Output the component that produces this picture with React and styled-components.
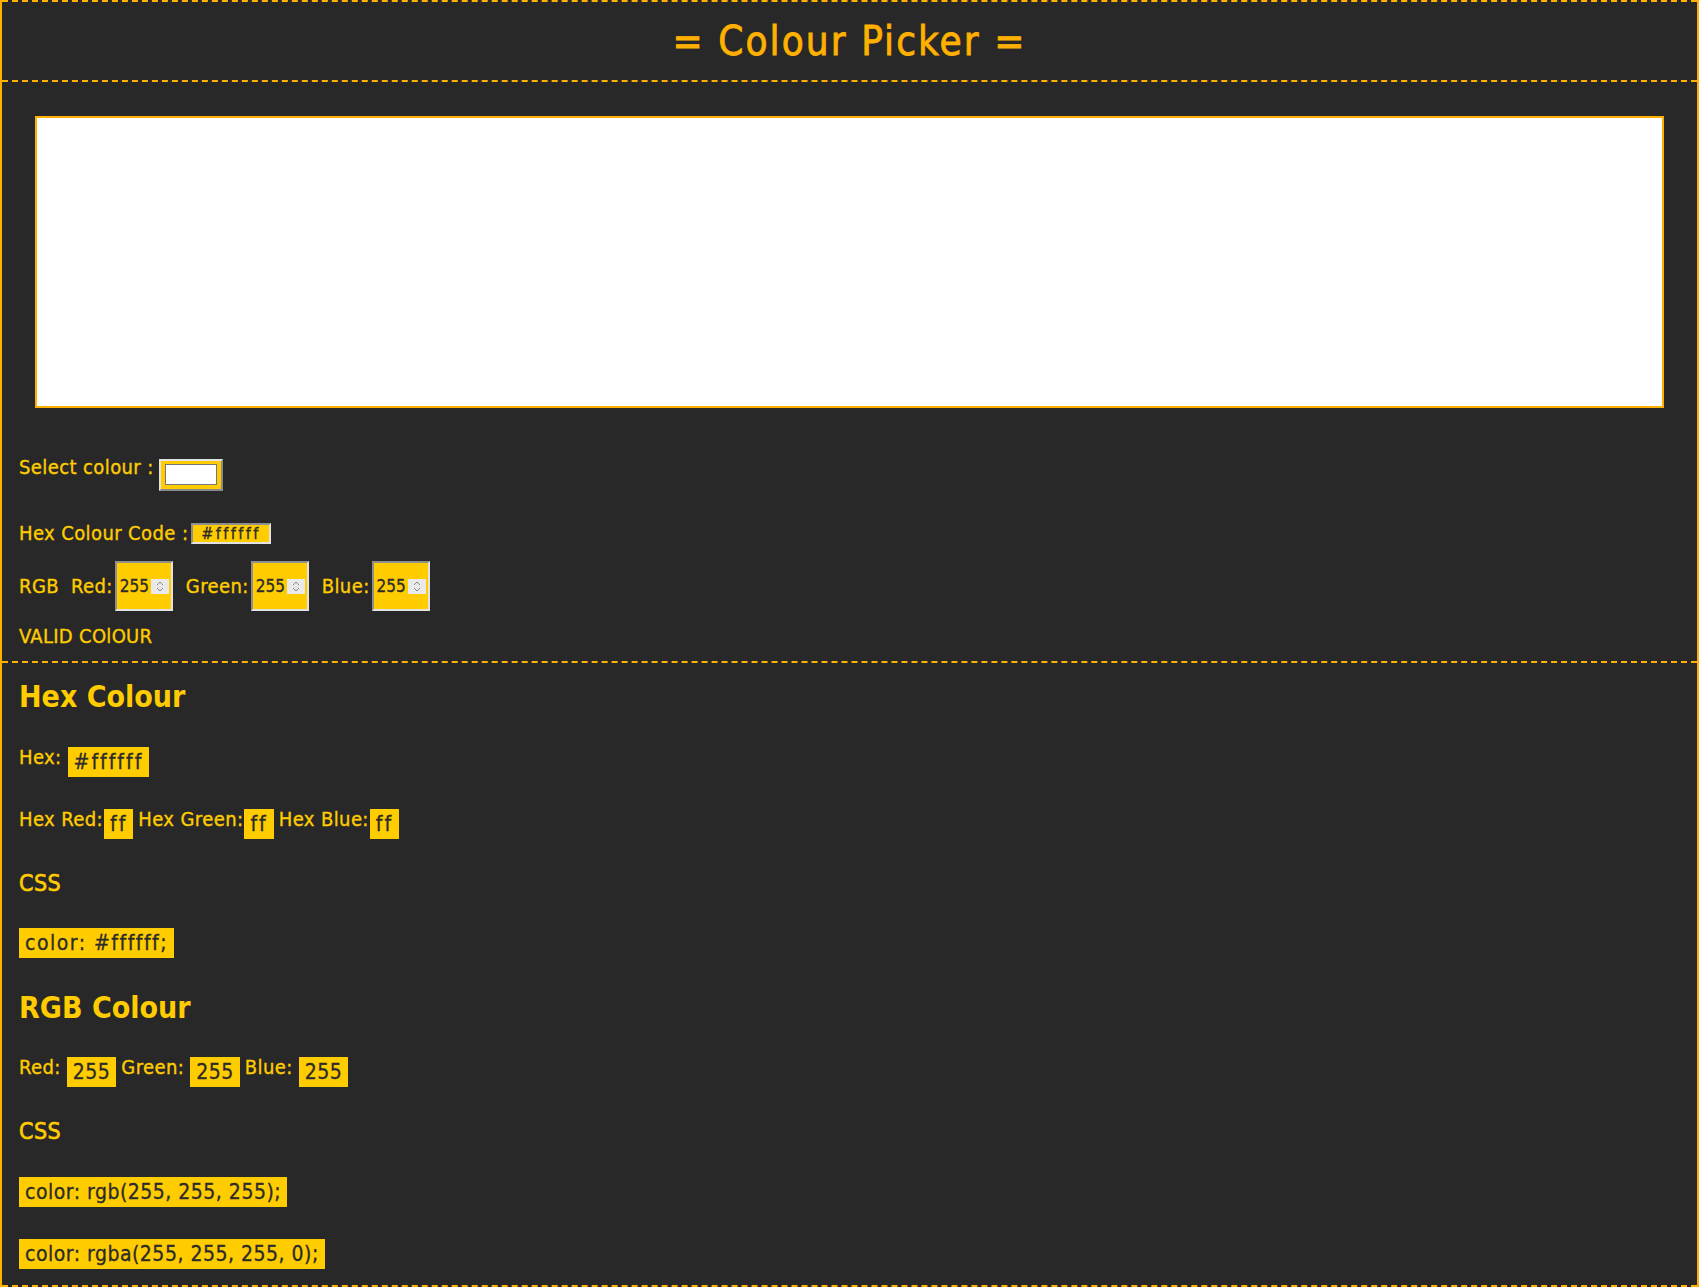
import React from "react";
import styled, { createGlobalStyle } from "styled-components";

const AMBER = "#ffb000";
const YELLOW = "#ffcc00";
const BG = "#282828";
const INK = "#2b2b2b";

const GlobalStyle = createGlobalStyle`
  html, body { margin: 0; padding: 0; background: ${BG}; }
  body {
    font-family: "DejaVu Sans Condensed", "DejaVu Sans", sans-serif;
    font-stretch: condensed;
    color: ${YELLOW};
  }
  * { box-sizing: border-box; }
`;

const Page = styled.div`
  display: flex;
  flex-direction: column;
  border-left: 2px solid ${AMBER};
  border-right: 2px solid ${AMBER};
`;

const Header = styled.header`
  height: 82px;
  border-top: 2px dashed ${AMBER};
  border-bottom: 2px dashed ${AMBER};
  display: flex;
  align-items: center;
  justify-content: center;
`;

const Title = styled.h1`
  margin: 0;
  font-size: 40px;
  line-height: 1;
  letter-spacing: 2.1px;
  font-weight: normal;
  -webkit-text-stroke: 0.8px currentColor;
  color: ${AMBER};
`;

const Section = styled.section`
  display: flex;
  flex-direction: column;
  align-items: flex-start;
  padding: ${(p) => p.$pad};
  border-bottom: 2px dashed ${AMBER};
`;

const Preview = styled.div`
  align-self: stretch;
  margin: 0 16px;
  height: 292px;
  background: ${(p) => p.$color};
  border: 2px solid ${AMBER};
`;

const Row = styled.div`
  display: flex;
  align-items: ${(p) => p.$align || "flex-start"};
  gap: ${(p) => p.$gap || 0}px;
  margin-top: ${(p) => p.$mt || 0}px;
`;

const Label = styled.span`
  font-size: 20px;
  line-height: normal;
  letter-spacing: 0.4px;
  -webkit-text-stroke: 0.35px currentColor;
  white-space: pre;
  margin-top: ${(p) => p.$mt || 0}px;
  margin-right: ${(p) => p.$mr || 0}px;
`;

const Status = styled.div`
  font-size: 20px;
  line-height: normal;
  letter-spacing: 0.3px;
  -webkit-text-stroke: 0.35px currentColor;
  margin-top: ${(p) => p.$mt || 0}px;
`;

const ColorWell = styled.div`
  width: 64px;
  height: 32px;
  display: flex;
  padding: 3px 4px 4px;
  background: ${YELLOW};
  border: 2px solid;
  border-color: #e2e2e2 #8a8a8a #8a8a8a #e2e2e2;
`;

const Swatch = styled.div`
  flex: 1;
  background: ${(p) => p.$color};
  border: 1px solid #767676;
`;

const HexField = styled.div`
  height: 21px;
  padding: 0 8px;
  display: flex;
  align-items: center;
  background: ${YELLOW};
  color: ${INK};
  font-size: 16px;
  letter-spacing: 2.4px;
  -webkit-text-stroke: 0.3px currentColor;
  border: 2px solid;
  border-color: #8f8f8f #e2e2e2 #e2e2e2 #8f8f8f;
`;

const Field = styled.div`
  display: flex;
  align-items: center;
  gap: 2px;
`;

const NumberBox = styled.div`
  width: 58px;
  height: 50px;
  display: flex;
  align-items: center;
  justify-content: space-between;
  padding: 0 2px 0 3px;
  background: ${YELLOW};
  color: ${INK};
  font-size: 17px;
  -webkit-text-stroke: 0.3px currentColor;
  border: 2px solid;
  border-color: #8f8f8f #e2e2e2 #e2e2e2 #8f8f8f;
`;

const Spinner = styled.div`
  width: 18px;
  height: 15px;
  display: flex;
  align-items: center;
  justify-content: center;
  background: #e9e9e9;
`;

const Heading = styled.h2`
  margin: ${(p) => p.$mt || 0}px 0 0;
  font-size: 30px;
  line-height: normal;
  font-weight: bold;
  color: ${YELLOW};
`;

const SubHeading = styled.h3`
  margin: ${(p) => p.$mt || 0}px 0 0;
  font-size: 23px;
  line-height: normal;
  font-weight: normal;
  letter-spacing: 0.5px;
  -webkit-text-stroke: 0.6px currentColor;
  color: ${YELLOW};
`;

const Pair = styled.div`
  display: flex;
  align-items: flex-start;
  gap: ${(p) => p.$gap}px;
`;

const Code = styled.code`
  display: inline-block;
  height: 30px;
  line-height: 30px;
  padding: 0 6px;
  font-family: inherit;
  font-size: 21px;
  letter-spacing: ${(p) => p.$tracking ?? 0.5}px;
  -webkit-text-stroke: 0.3px currentColor;
  white-space: pre;
  color: ${INK};
  background: ${YELLOW};
  margin-top: ${(p) => p.$mt || 0}px;
`;

const SpinIcon = () => (
  <svg width="10" height="13" viewBox="0 0 10 13" fill="none" stroke="#8a8a8a" strokeWidth="1">
    <path d="M2 5 L5 2 L8 5" />
    <path d="M2 8 L5 11 L8 8" />
  </svg>
);

const NumberInput = ({ value }) => (
  <NumberBox>
    <span>{value}</span>
    <Spinner>
      <SpinIcon />
    </Spinner>
  </NumberBox>
);

const colour = { hex: "#ffffff", r: 255, g: 255, b: 255 };
const toHex = (n) => n.toString(16).padStart(2, "0");

export default function App() {
  const { hex, r, g, b } = colour;
  return (
    <>
      <GlobalStyle />
      <Page>
        <Header>
          <Title>= Colour Picker =</Title>
        </Header>

        <Section $pad="34px 17px 13px">
          <Preview $color={hex} />

          <Row $mt={51} $gap={5}>
            <Label $mt={-4}>Select colour :</Label>
            <ColorWell>
              <Swatch $color={hex} />
            </ColorWell>
          </Row>

          <Row $mt={32} $gap={3}>
            <Label $mt={-2}>Hex Colour Code :</Label>
            <HexField>{hex}</HexField>
          </Row>

          <Row $mt={16} $gap={13} $align="center">
            <Label $mr={-1}>RGB</Label>
            <Field>
              <Label>Red:</Label>
              <NumberInput value={r} />
            </Field>
            <Field>
              <Label>Green:</Label>
              <NumberInput value={g} />
            </Field>
            <Field>
              <Label>Blue:</Label>
              <NumberInput value={b} />
            </Field>
          </Row>

          <Status $mt={13}>VALID COlOUR</Status>
        </Section>

        <Section $pad="0 17px 16px">
          <Heading $mt={16}>Hex Colour</Heading>

          <Row $mt={33}>
            <Pair $gap={6}>
              <Label $mt={-2}>Hex:</Label>
              <Code $tracking={2}>{hex}</Code>
            </Pair>
          </Row>

          <Row $mt={32} $gap={5}>
            <Pair $gap={1}>
              <Label $mt={-2}>Hex Red:</Label>
              <Code $tracking={2}>{toHex(r)}</Code>
            </Pair>
            <Pair $gap={1}>
              <Label $mt={-2}>Hex Green:</Label>
              <Code $tracking={2}>{toHex(g)}</Code>
            </Pair>
            <Pair $gap={1}>
              <Label $mt={-2}>Hex Blue:</Label>
              <Code $tracking={2}>{toHex(b)}</Code>
            </Pair>
          </Row>

          <SubHeading $mt={31}>CSS</SubHeading>
          <Code $mt={32} $tracking={1.5}>{`color: ${hex};`}</Code>

          <Heading $mt={32}>RGB Colour</Heading>

          <Row $mt={32} $gap={5}>
            <Pair $gap={6}>
              <Label $mt={-2}>Red:</Label>
              <Code>{r}</Code>
            </Pair>
            <Pair $gap={6}>
              <Label $mt={-2}>Green:</Label>
              <Code>{g}</Code>
            </Pair>
            <Pair $gap={6}>
              <Label $mt={-2}>Blue:</Label>
              <Code>{b}</Code>
            </Pair>
          </Row>

          <SubHeading $mt={31}>CSS</SubHeading>
          <Code $mt={33}>{`color: rgb(${r}, ${g}, ${b});`}</Code>
          <Code $mt={32}>{`color: rgba(${r}, ${g}, ${b}, 0);`}</Code>
        </Section>
      </Page>
    </>
  );
}
